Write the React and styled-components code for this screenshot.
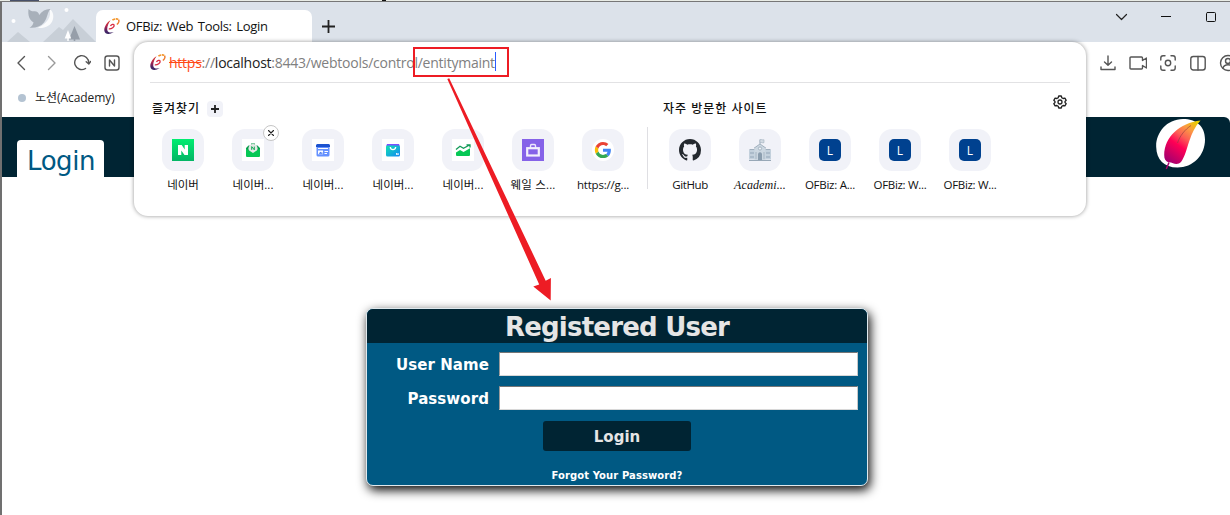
import React from "react";
import styled, { createGlobalStyle } from "styled-components";

const ui = `"Open Sans", "Noto Sans CJK KR", sans-serif`;
const verdana = `"DejaVu Sans", sans-serif`;

const GlobalStyle = createGlobalStyle`
  * { box-sizing: border-box; }
  html, body { margin: 0; padding: 0; overflow: hidden; background: #fff; }
  svg { display: block; flex: none; }
`;

const Desktop = styled.div`
  width: 1230px;
  height: 515px;
  overflow: hidden;
  position: relative;
  display: flex;
  flex-direction: column;
  background: #fff;
  font-family: ${ui};
`;

const TopEdge = styled.div`
  height: 2px;
  flex: none;
  background: linear-gradient(90deg, transparent 10px, #475069 10px, #475069 39px, transparent 39px,
    transparent 382px, #111 382px, #111 386px, transparent 386px) 0 0 / 100% 1px no-repeat, #e9ece6;
  border-bottom: 1px solid #777;
`;

const Window = styled.div`
  flex: 1;
  display: flex;
  flex-direction: column;
  border-left: 2px solid #707070;
`;

const TabStrip = styled.div`
  height: 40px;
  flex: none;
  display: flex;
  align-items: flex-end;
  background: #dce2ea;
`;

const Tab = styled.div`
  width: 216px;
  height: 32px;
  display: flex;
  align-items: center;
  gap: 6px;
  padding-left: 8px;
  border-radius: 7px 7px 0 0;
  background: #fff;
`;

const TabTitle = styled.span`
  font-size: 13px;
  line-height: 18px;
  color: #111;
  white-space: nowrap;
  word-spacing: 1.6px;
  letter-spacing: -0.31px;
`;

const NewTab = styled.div`
  padding: 0 0 9px 10px;
`;

const WindowControls = styled.div`
  margin-left: auto;
  height: 30px;
  align-self: flex-start;
  display: flex;
  align-items: center;
  gap: 32px;
  padding-right: 13px;
`;

const Toolbar = styled.div`
  height: 42px;
  flex: none;
  display: flex;
  align-items: center;
  justify-content: space-between;
  padding-left: 11px;
`;

const IconGroup = styled.div`
  display: flex;
  align-items: center;
  gap: ${(p) => p.$gap}px;
  margin-right: ${(p) => p.$pull || 0}px;
`;

const Bookmarks = styled.div`
  height: 33px;
  flex: none;
  display: flex;
  align-items: center;
  gap: 9px;
  padding: 0 0 5px 16px;
  font-size: 12px;
  line-height: 18px;
  color: #222;
  letter-spacing: -0.05px;
`;

const Dot = styled.span`
  width: 8px;
  height: 8px;
  border-radius: 50%;
  background: #b4c3d2;
`;

const SiteHeader = styled.header`
  height: 60px;
  flex: none;
  display: flex;
  align-items: flex-end;
  justify-content: space-between;
  padding: 0 22px 0 15px;
  background: #002433;
  border-top-right-radius: 6px;
`;

const LoginTab = styled.div`
  width: 87px;
  height: 37px;
  padding: 4px 0 0 1px;
  border-radius: 4px 4px 0 0;
  background: #fff;
  color: #005983;
  text-align: center;
  font-family: ${verdana};
  font-size: 26px;
  line-height: 34px;
  letter-spacing: -0.45px;
`;

const Content = styled.main`
  flex: 1;
  padding: 131px 0 0 364px;
`;

const LoginCard = styled.form`
  width: 502px;
  height: 178px;
  margin: 0;
  border: 1px solid #dfe9ee;
  border-radius: 7px;
  overflow: hidden;
  background: #005983;
  box-shadow: 2px 4px 11px 0 #000;
  font-family: ${verdana};
  font-weight: bold;
`;

const CardTitle = styled.h1`
  margin: 0;
  height: 34px;
  background: #002433;
  color: #e5e5e5;
  text-align: center;
  font-size: 26px;
  line-height: 37px;
  letter-spacing: -0.78px;
`;

const Field = styled.label`
  display: grid;
  grid-template-columns: 122px 359px;
  column-gap: 10px;
  align-items: center;
  height: 24px;
  margin-top: ${(p) => p.$top}px;
  color: #fff;
  font-size: 15px;
  line-height: 18px;
  letter-spacing: 0.08px;
  text-align: right;
`;

const FieldName = styled.span`
  padding-top: 2px;
`;

const Input = styled.input`
  width: 359px;
  height: 24px;
  padding: 2px 4px;
  border: 1px solid;
  border-color: #767676 #c8c8c8 #d8d8d8 #9a9a9a;
  border-radius: 0;
  background: #fff;
  outline: none;
`;

const LoginButton = styled.button`
  display: block;
  width: 148px;
  height: 30px;
  margin: 11px 0 0 176px;
  padding: 2px 0 0;
  border: 0;
  border-radius: 3px;
  background: #002433;
  color: #e5e5e5;
  font: bold 15px ${verdana};
`;

const Forgot = styled.a`
  display: block;
  margin-top: 18px;
  color: #fff;
  text-align: center;
  font-size: 10px;
  line-height: 14px;
  letter-spacing: 0.1px;
`;

const Dropdown = styled.section`
  position: absolute;
  left: 134px;
  top: 42px;
  width: 952px;
  height: 174px;
  padding: 0 16px;
  border-radius: 14px;
  background: #fff;
  box-shadow: 0 0 4px rgba(0, 0, 0, 0.42);
`;

const AddressRow = styled.div`
  height: 41px;
  display: flex;
  align-items: center;
  gap: 3px;
  padding-top: 1px;
  border-bottom: 1px solid #e2e2e4;
`;

const Url = styled.span`
  display: flex;
  align-items: center;
  padding-top: 1px;
  font-size: 14px;
  line-height: 20px;
  color: #808080;
  white-space: nowrap;
  letter-spacing: -0.24px;
`;

const Scheme = styled.s`
  color: #ff4a17;
`;

const Host = styled.span`
  color: #222;
`;

const Caret = styled.i`
  width: 1px;
  height: 19px;
  margin-top: -3px;
  background: #2a5bff;
`;

const Sites = styled.div`
  display: flex;
`;

const SiteGroup = styled.div`
  width: ${(p) => p.$width}px;
  padding-top: 17px;
`;

const GroupTitle = styled.h2`
  margin: 0;
  height: 18px;
  display: flex;
  align-items: center;
  gap: 7px;
  padding-left: ${(p) => p.$inset}px;
  color: #111;
  font-size: 12px;
  font-weight: 500;
  line-height: 18px;
  white-space: nowrap;
  letter-spacing: 1px;
`;

const AddButton = styled.span`
  width: 16px;
  height: 16px;
  display: grid;
  place-items: center;
  border-radius: 4px;
  background: #f1f2f8;
`;

const Tiles = styled.div`
  display: flex;
  margin: 11px 0 0 ${(p) => p.$shift}px;
`;

const TileItem = styled.div`
  width: 70px;
  flex: none;
  display: flex;
  flex-direction: column;
  align-items: center;
  position: relative;
`;

const Tile = styled.div`
  width: 42px;
  height: 42px;
  display: grid;
  place-items: center;
  border-radius: 13px;
  background: #f1f2f8;
`;

const TileLabel = styled.span`
  margin-top: 5px;
  height: 18px;
  font-size: ${(p) => (p.$serif ? 12 : 11.5)}px;
  line-height: 18px;
  color: #111;
  white-space: nowrap;
  letter-spacing: ${(p) => p.$track || 0}px;
  font-family: ${(p) => (p.$serif ? `"Liberation Serif", serif` : ui)};
  font-style: ${(p) => (p.$serif ? "italic" : "normal")};
`;

const CloseBadge = styled.span`
  position: absolute;
  left: 45px;
  top: -4px;
  width: 16px;
  height: 16px;
  display: grid;
  place-items: center;
  border: 1px solid #c6c6c6;
  border-radius: 50%;
  background: #fff;
`;

const LetterIcon = styled.span`
  width: 22px;
  height: 22px;
  border-radius: 5px;
  background: #00418f;
  color: #fff;
  font-size: 12px;
  line-height: 24px;
  text-align: center;
`;

const GroupDivider = styled.div`
  width: 1px;
  height: 62px;
  margin-top: 44px;
  background: #dfdfe3;
`;

const SettingsButton = styled.div`
  padding-top: 12px;
  margin-left: auto;
  margin-right: 3px;
`;

const UrlHighlight = styled.div`
  position: absolute;
  left: 413px;
  top: 47px;
  width: 96px;
  height: 30px;
  border: 2px solid #ed1c24;
`;

const Pointer = styled.svg`
  position: absolute;
  left: 440px;
  top: 74px;
`;

const Line = ({ size = 18, w = 1.4, color = "#555", children, ...rest }) => (
  <svg width={size} height={size} viewBox={`0 0 ${size} ${size}`} fill="none" stroke={color} strokeWidth={w} strokeLinecap="round" strokeLinejoin="round" {...rest}>
    {children}
  </svg>
);

const Favicon = () => (
  <svg width="16" height="17" viewBox="0 0 16 17" fill="none">
    <defs>
      <linearGradient id="swirl" gradientUnits="userSpaceOnUse" x1="5" y1="2" x2="4" y2="16">
        <stop offset="0" stopColor="#e0402f" />
        <stop offset="0.45" stopColor="#b3234c" />
        <stop offset="0.8" stopColor="#4a2468" />
        <stop offset="1" stopColor="#33215f" />
      </linearGradient>
    </defs>
    <path d="M6.600 2.200C2.500 4.400-.3 9.500.4 13c.6 3.300 4.900 4 9.300 1.100-3.300.9-6 .3-6.400-2.200-.4-3 1.100-6.800 3.300-9.700z" fill="url(#swirl)" />
    <path d="M4.800 10.800c3 .3 5.700-2 5.300-3.700-.4-1.400-2.800-.8-3.600.9" stroke="#d92b42" strokeWidth="1.300" />
    <path d="M8.400 2.200C10 .8 13 .4 14.300 1.500" stroke="#f3962c" strokeWidth="1.600" strokeDasharray="3 .6" />
    <path d="M14.500 1.800c.9 1.100.1 3.300-1.600 4.700" stroke="#ee7a2c" strokeWidth="1.500" />
  </svg>
);

const WhaleScene = () => (
  <svg width="94" height="40" viewBox="2 2 94 40">
    <path d="M7 42l11-10 12 10zM43 42l16-15 4 3 10-11 23 23z" fill="#c8cfd7" />
    <circle cx="13.500" cy="21" r="2" fill="#fff" />
    <circle cx="66.500" cy="10" r="2" fill="#fff" />
    <path d="M49.500 9c2.300 8-2.200 14.500-12 19 8.500.5 13.500-2.500 15.400-8.500 1.200-4.200-.2-8.700-3.400-10.500z" fill="#fafbfc" />
    <path d="M28.500 9c1.700 1.800 3.500 2.500 6 2.300 2.400-.1 4.200 1 4.600 3.700 3-4 7-6.300 11.500-6-3.500 3-2.700 8.400-6.600 13.500-3.600 4.200-8.800 5.700-14.500 5.200 2.100-1.300 3.600-3.200 4-5.500-3.800-1.800-5.900-6.200-5-13.200z" fill="#a8b0ba" />
    <path d="M74.500 26L80 39.500h-4.700V41h-1.600v-1.500H69z" fill="#969ea9" />
    <path d="M68 30l3.200 8.500h-2.500V41h-1.400v-2.500h-2.600z" fill="#fff" />
  </svg>
);

const Feather = () => (
  <svg width="52" height="60" viewBox="1156 117 52 60">
    <defs>
      <linearGradient id="feather" x1="0.85" y1="0" x2="0.25" y2="1">
        <stop offset="0" stopColor="#e8d000" />
        <stop offset="0.22" stopColor="#fb9a44" />
        <stop offset="0.42" stopColor="#fc5c55" />
        <stop offset="0.62" stopColor="#ff0055" />
        <stop offset="1" stopColor="#a8006e" />
      </linearGradient>
    </defs>
    <path d="M1156.200 147C1155.500 134 1166 119 1183 119c13 0 22 7 22 20.500 0 16-12 28-27.500 28-13.500 0-21-8-21.300-20.500z" fill="#fff" />
    <path d="M1200.500 120.500c-5.500 6-8.500 12.500-11 20-2.600 7.500-4.600 16.500-8.500 21.500-2 2.300-5.500 2.300-8 1.200-1.500-.7-3.200-.6-4.800-.9-2.500-.9-4.100-3.300-4-7.300.3-18 15.300-32 36.300-34.500z" fill="url(#feather)" />
    <path d="M1169 162.500l-2.700 6.500" stroke="#a8006e" strokeWidth="1.500" />
    <path d="M1191 125.500c-6 4-11 10-13.500 17.500" fill="none" stroke="#8d3840" strokeWidth="0.600" />
  </svg>
);

const Plus = ({ size, w }) => (
  <Line size={size} w={w} color="#222" strokeLinecap="butt">
    <path d={`M${size / 2} 0V${size}M0 ${size / 2}H${size}`} />
  </Line>
);

const Naver = () => (
  <svg width="22" height="22">
    <defs>
      <linearGradient id="naver" x2="0" y2="1">
        <stop stopColor="#00ed70" />
        <stop offset="1" stopColor="#04b565" />
      </linearGradient>
    </defs>
    <rect width="22" height="22" fill="url(#naver)" />
    <path d="M6 6h3.700l3 4.400V6H16v10h-3.500l-3.200-4.600V16H6z" fill="#fff" />
  </svg>
);

const Mail = () => (
  <svg width="22" height="22">
    <rect width="22" height="22" fill="#fff" />
    <path d="M4 9l2.500-2.500h9L18 9v3H4zM9 4.500h4V6H9z" fill="#079a4b" />
    <circle cx="11" cy="9.500" r="4.600" fill="#e4e8e6" />
    <path d="M9.700 10.800V7.600l2.600 3.200V7.600" fill="none" stroke="#14a956" strokeWidth="1" />
    <path d="M4 9.500l7 4.500 7-4.500V17a1 1 0 0 1-1 1H5a1 1 0 0 1-1-1z" fill="#06c755" />
  </svg>
);

const News = () => (
  <svg width="22" height="22">
    <rect width="22" height="22" fill="#fff" />
    <rect x="4.500" y="5" width="13" height="12.500" rx="1.500" fill="#6591ff" />
    <path d="M4 8V6.500A1.500 1.500 0 0 1 5.500 5h11A1.500 1.500 0 0 1 18 6.500V8z" fill="#1b52cf" />
    <path d="M6 9.500h10" stroke="#fff" strokeWidth="1" />
    <path d="M6 11.500h5v3.800H6zM12.500 12h3.500v1h-3.500zM12.500 14h2.500v1h-2.500z" fill="#fff" />
    <path d="M6.700 14.800l1.600-2 1 1 .8-.7.600 1.700z" fill="#3f73ee" />
  </svg>
);

const Shopping = () => (
  <svg width="22" height="22">
    <defs>
      <linearGradient id="shop" x2="1" y2="1">
        <stop stopColor="#11e2b2" />
        <stop offset="1" stopColor="#1487f5" />
      </linearGradient>
    </defs>
    <rect width="22" height="22" fill="#fff" />
    <path d="M5 5h12l1 2.500H4z" fill="#7a50ff" />
    <rect x="4" y="6.500" width="14" height="11" rx="1.500" fill="url(#shop)" />
    <path d="M8.300 8c.3 3.600 5 3.600 5.400 0" fill="none" stroke="#fff" strokeWidth="1.300" />
    <path d="M14.500 16v-2l1.700 2v-2" fill="none" stroke="#fff" strokeWidth="0.800" />
  </svg>
);

const Stocks = () => (
  <svg width="22" height="22">
    <rect width="22" height="22" fill="#fff" />
    <path d="M4 13.500l4-2.500 3.500 2L18 9.200V16a1 1 0 0 1-1 1H5a1 1 0 0 1-1-1z" fill="#06c755" />
    <path d="M4 10.500l4-3.200 3.500 2L17.500 6M14.500 5.800H18v2.700" fill="none" stroke="#129a58" strokeWidth="1.300" />
  </svg>
);

const Store = () => (
  <svg width="22" height="22" fill="none" stroke="#fff">
    <rect width="22" height="22" fill="#8562e8" stroke="none" />
    <rect x="5.200" y="9.200" width="11.600" height="7.300" strokeWidth="2.200" strokeOpacity="0.900" />
    <path d="M8.500 8.500V6.700Q8.500 5.500 9.700 5.500h2.600q1.200 0 1.200 1.200v1.800" strokeWidth="1.400" strokeOpacity="0.850" />
  </svg>
);

const Google = () => (
  <svg width="22" height="22">
    <circle cx="11" cy="11" r="11" fill="#fff" />
    <g transform="translate(2.900 2.900) scale(.675)">
      <path fill="#4285F4" d="M23.700 12.300c0-.9-.1-1.500-.2-2.200H12v4.400h6.700c-.2 1.100-.9 2.700-2.500 3.800l3.800 3c2.300-2.100 3.700-5.200 3.700-9z" />
      <path fill="#34A853" d="M12 24c3.200 0 6-1.100 8-2.900l-3.800-3c-1 .7-2.400 1.200-4.200 1.200-3.200 0-5.800-2.100-6.800-5l-4 3.100C3.200 21.300 7.300 24 12 24z" />
      <path fill="#FBBC05" d="M5.200 14.300c-.5-1.500-.5-3.100 0-4.600l-4-3.100c-1.700 3.400-1.700 7.400 0 10.800z" />
      <path fill="#EA4335" d="M12 4.700c2.300 0 3.800 1 4.700 1.800L20 3.200C18 1.200 15.200 0 12 0 7.300 0 3.200 2.700 1.200 6.600l4 3.100c1-2.900 3.600-5 6.800-5z" />
    </g>
  </svg>
);

const GitHub = () => (
  <svg width="22" height="22" viewBox="0 0 16 16" fill="#24292f">
    <path d="M8 0C3.580 0 0 3.580 0 8c0 3.540 2.290 6.530 5.470 7.590.4.070.550-.170.550-.380 0-.190-.010-.820-.010-1.490-2.010.370-2.530-.490-2.690-.940-.090-.230-.480-.940-.820-1.130-.280-.150-.680-.520-.010-.530.630-.010 1.080.580 1.230.820.720 1.210 1.870.870 2.330.660.070-.520.280-.870.510-1.070-1.780-.200-3.640-.890-3.640-3.950 0-.870.310-1.590.820-2.150-.080-.200-.360-1.020.080-2.120 0 0 .670-.210 2.200.820.640-.180 1.320-.270 2-.270s1.360.090 2 .270c1.530-1.040 2.200-.820 2.200-.820.440 1.100.160 1.920.080 2.120.510.560.820 1.270.820 2.150 0 3.070-1.870 3.750-3.650 3.950.290.250.540.730.540 1.480 0 1.070-.010 1.930-.010 2.200 0 .210.150.460.550.380A8.010 8.010 0 0 0 16 8c0-4.420-3.580-8-8-8z" />
  </svg>
);

const School = () => (
  <svg width="22" height="22">
    <path d="M0 11h22v9.500H0z" fill="#c3d0dc" />
    <path d="M5.500 9L11 5l5.500 4v12h-11z" fill="#ccd7e1" />
    <path d="M.5 10.500h5M16.500 10.500h5M5 9.200L11 5l6 4.200M11 5V.5" stroke="#a0afbd" fill="none" />
    <path d="M11 .7c1.500-.8 2.500.7 4 0v3c-1.500.7-2.500-.8-4 0z" fill="#d3dbe3" stroke="#a3b1bf" strokeWidth="0.600" />
    <circle cx="11" cy="9.500" r="1.600" fill="#eef3f7" stroke="#98a8b7" strokeWidth="0.800" />
    <path d="M2 13v2M4 13v2M2 17v2M4 17v2M18 13v2M20 13v2M18 17v2M20 17v2" stroke="#8fa1b3" strokeWidth="0.900" />
    <path d="M7 13v7M15 13v7" stroke="#a5b4c2" strokeWidth="1" />
    <path d="M9 21v-6.500q2-2.500 4 0V21z" fill="#8b9dae" />
    <path d="M0 21.500h22" stroke="#98a8b7" />
  </svg>
);

const Letter = () => <LetterIcon>L</LetterIcon>;

const favorites = [
  { label: "네이버", Icon: Naver },
  { label: "네이버...", Icon: Mail, closable: true },
  { label: "네이버...", Icon: News },
  { label: "네이버...", Icon: Shopping },
  { label: "네이버...", Icon: Stocks },
  { label: "웨일 스...", Icon: Store, track: 0.2 },
  { label: "https://g...", Icon: Google, track: -0.2 },
];

const frequent = [
  { label: "GitHub", Icon: GitHub, track: -0.4 },
  { label: "Academi...", Icon: School, serif: true, track: 0.08 },
  { label: "OFBiz: A...", Icon: Letter, track: -0.25 },
  { label: "OFBiz: W...", Icon: Letter, track: -0.3 },
  { label: "OFBiz: W...", Icon: Letter, track: -0.3 },
];

const TileRow = ({ items, shift }) => (
  <Tiles $shift={shift}>
    {items.map(({ label, Icon, closable, serif, track }, i) => (
      <TileItem key={i}>
        <Tile><Icon /></Tile>
        {closable && (
          <CloseBadge>
            <Line size={6} w={1.100} color="#222"><path d="M.5.5l5 5M5.500.5l-5 5" /></Line>
          </CloseBadge>
        )}
        <TileLabel $serif={serif} $track={track}>{label}</TileLabel>
      </TileItem>
    ))}
  </Tiles>
);

export default function App() {
  return (
    <Desktop>
      <GlobalStyle />
      <TopEdge />
      <Window>
        <TabStrip>
          <WhaleScene />
          <Tab>
            <Favicon />
            <TabTitle>OFBiz: Web Tools: Login</TabTitle>
          </Tab>
          <NewTab><Plus size={13} w={1.800} /></NewTab>
          <WindowControls>
            <Line size={14} w={1.200} color="#222"><path d="M1.500 4.500l5 5 5-5" /></Line>
            <Line size={12} w={1} color="#111" strokeLinecap="butt"><path d="M0 5.500h10" /></Line>
            <Line size={12} w={1} color="#111"><rect x="1.500" y="1.500" width="9" height="9" rx="1" /></Line>
          </WindowControls>
        </TabStrip>

        <Toolbar>
          <IconGroup $gap={12}>
            <Line><path d="M11.500 2.500L5 9l6.500 6.500" /></Line>
            <Line color="#999"><path d="M5.500 2.500L12 9l-6.500 6.500" /></Line>
            <Line><path d="M12.500 14.500A7 7 0 1 1 15.700 9M13.200 7.800l2.600 2.200 1.900-2.600" /></Line>
            <Line><rect x="2" y="2" width="14" height="14" rx="2.500" /><path d="M6.500 12V6l5 6V6" /></Line>
          </IconGroup>
          <IconGroup $gap={12} $pull={-7}>
            <Line><path d="M9 2v9M5.500 8L9 11.300 12.500 8M2 13v2.500h14V13" /></Line>
            <Line><path d="M2 3h10.500q1 0 1 1v2.500L17.500 4v10l-4-2.500V14q0 1-1 1H2q-1 0-1-1V4q0-1 1-1z" /></Line>
            <Line><path d="M1.800 6V4q0-2.200 2.200-2.200h2M12 1.800h2q2.200 0 2.200 2.200v2M16.200 12v2q0 2.200-2.200 2.200h-2M6 16.200H4q-2.200 0-2.200-2.200v-2" /><circle cx="9" cy="9" r="2.700" /></Line>
            <Line><rect x="1.800" y="2.500" width="14.400" height="13.500" rx="2.500" /><path d="M9 2.500V16" /></Line>
            <Line><circle cx="9" cy="9" r="7.500" /><circle cx="9" cy="7" r="2.500" /><path d="M4 14q1-3.200 5-3.200t5 3.200" /></Line>
          </IconGroup>
        </Toolbar>

        <Bookmarks><Dot /><span>노션(Academy)</span></Bookmarks>

        <SiteHeader>
          <LoginTab>Login</LoginTab>
          <Feather />
        </SiteHeader>

        <Content>
          <LoginCard>
            <CardTitle>Registered User</CardTitle>
            <Field $top={9}><FieldName>User Name</FieldName><Input /></Field>
            <Field $top={10}><FieldName>Password</FieldName><Input type="password" /></Field>
            <LoginButton type="button">Login</LoginButton>
            <Forgot>Forgot Your Password?</Forgot>
          </LoginCard>
        </Content>
      </Window>

      <Dropdown>
        <AddressRow>
          <Favicon />
          <Url>
            <Scheme>https</Scheme>://<Host>localhost</Host>:8443/webtools/control/entitymaint
            <Caret />
          </Url>
        </AddressRow>
        <Sites>
          <SiteGroup $width={497}>
            <GroupTitle $inset={2}>
              즐겨찾기 <AddButton><Plus size={8} w={1.800} /></AddButton>
            </GroupTitle>
            <TileRow items={favorites} shift={-2} />
          </SiteGroup>
          <GroupDivider />
          <SiteGroup $width={360}>
            <GroupTitle $inset={15}>자주 방문한 사이트</GroupTitle>
            <TileRow items={frequent} shift={7} />
          </SiteGroup>
          <SettingsButton>
            <Line size={14} w={1.300} color="#222">
              <path d="M5.700 1h2.600l.5 1.700 1.300.8 1.800-.4 1.300 2.200L12 6.500v1l1.200 1.200-1.300 2.200-1.800-.4-1.300.8L8.300 13H5.700l-.5-1.700-1.300-.8-1.800.4L.8 8.700 2 7.500v-1L.8 5.300l1.300-2.200 1.800.4 1.300-.8z" />
              <circle cx="7" cy="7" r="2" />
            </Line>
          </SettingsButton>
        </Sites>
      </Dropdown>

      <UrlHighlight />
      <Pointer width="116" height="230" viewBox="440 74 116 230">
        <path d="M447.300 79L449.200 78.300 545.700 280.700 550.900 278 550.700 300.500 533.300 286.500 539.200 284.500z" fill="#ed1c24" />
      </Pointer>
    </Desktop>
  );
}
